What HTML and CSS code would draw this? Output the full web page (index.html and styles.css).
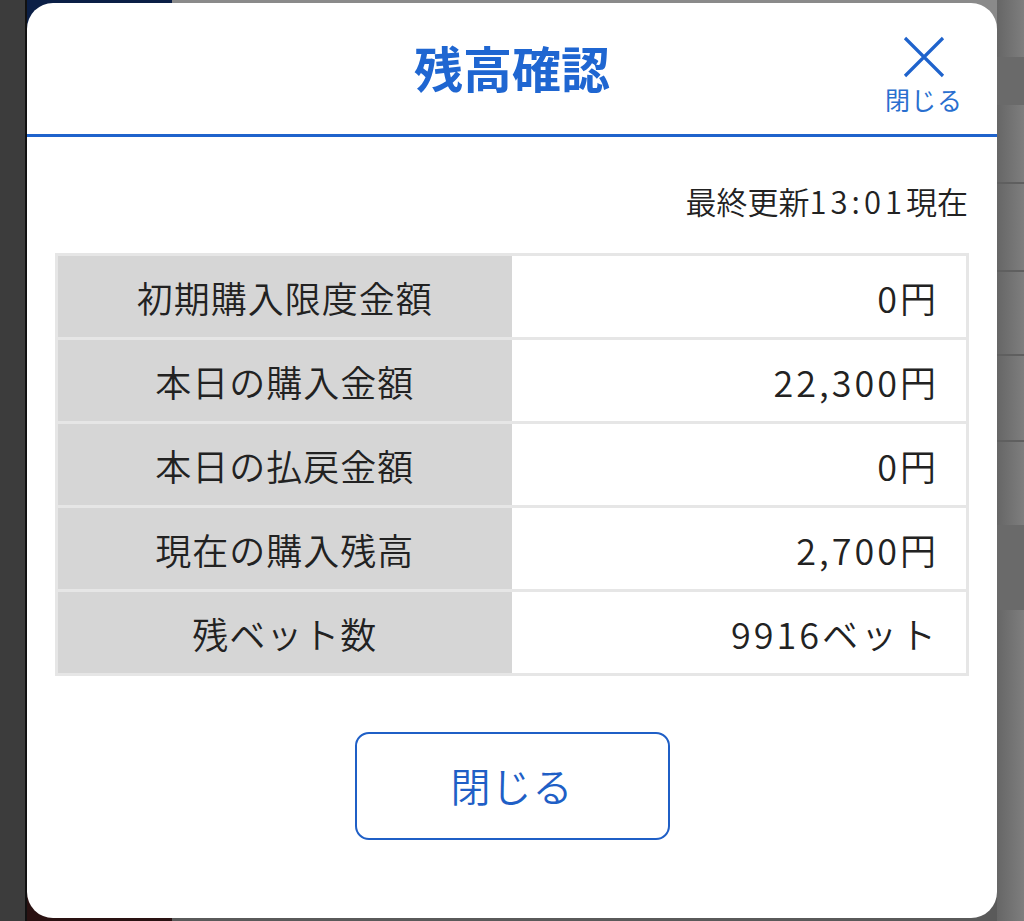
FILE: index.html
```html
<!DOCTYPE html>
<html lang="ja">
<head>
<meta charset="utf-8">
<title>残高確認</title>
<link rel="stylesheet" href="styles.css">
</head>
<body>
<div class="page">
  <div class="side side-left"></div>
  <div class="center">
    <div class="modal">
      <header class="modal-header">
        <div class="spacer"></div>
        <h1 class="title">残高確認</h1>
        <button class="close-top" type="button">
          <svg class="close-icon" width="42" height="42" viewBox="0 0 42 42" aria-hidden="true">
            <path d="M2 2 L40 40 M40 2 L2 40" stroke="#1f63cc" stroke-width="3.2" fill="none" stroke-linecap="butt"/>
          </svg>
          <span class="close-label">閉じる</span>
        </button>
      </header>
      <div class="modal-body">
        <p class="updated">最終更新<span class="num">13:01</span>現在</p>
        <table class="balance">
          <tr><th>初期購入限度金額</th><td>0円</td></tr>
          <tr><th>本日の購入金額</th><td>22,300円</td></tr>
          <tr><th>本日の払戻金額</th><td>0円</td></tr>
          <tr><th>現在の購入残高</th><td>2,700円</td></tr>
          <tr><th>残ベット数</th><td>9916ベット</td></tr>
        </table>
        <div class="actions">
          <button class="close-btn" type="button">閉じる</button>
        </div>
      </div>
    </div>
  </div>
  <div class="side side-right"></div>
</div>
</body>
</html>
```
FILE: styles.css
```css
* { box-sizing: border-box; }
html, body { margin: 0; padding: 0; }
body {
  width: 1024px;
  height: 921px;
  overflow: hidden;
  font-family: "Noto Sans CJK JP", "Noto Sans", sans-serif;
  background: #3b3b3b;
}
.page {
  display: grid;
  grid-template-columns: 27px 970px 27px;
  height: 921px;
}
.side-left {
  background: #3c3c3c;
  border-right: 2px solid #111;
}
.side-right {
  background:
    linear-gradient(#6a6a6a, #6a6a6a) 0 57px / 100% 48px no-repeat,
    linear-gradient(#5f5f5f, #5f5f5f) 0 182px / 100% 2px no-repeat,
    linear-gradient(#5f5f5f, #5f5f5f) 0 270px / 100% 2px no-repeat,
    linear-gradient(#5f5f5f, #5f5f5f) 0 354px / 100% 2px no-repeat,
    linear-gradient(#5f5f5f, #5f5f5f) 0 440px / 100% 2px no-repeat,
    linear-gradient(#6a6a6a, #6a6a6a) 0 525px / 100% 85px no-repeat,
    linear-gradient(to right, #666, #7e7e7e);
}
.center {
  background:
    linear-gradient(to right, #0b1f46 15%, #8a8a8a 15%) top / 100% 40px no-repeat,
    linear-gradient(to right, #2a1212 15%, #5a5a5a 15%) bottom / 100% 40px no-repeat,
    #3b3b3b;
  padding-top: 3px;
}
.modal {
  background: #fff;
  height: 915px;
  border-radius: 26px;
  overflow: hidden;
}
.modal-header {
  height: 134px;
  border-bottom: 3px solid #1f63cc;
  display: grid;
  grid-template-columns: 1fr auto 1fr;
  align-items: start;
}
.title {
  margin: 0;
  padding-top: 32px;
  font-size: 49px;
  line-height: 64px;
  font-weight: 700;
  color: #1f66d1;
}
.close-top {
  justify-self: end;
  margin-right: 34px;
  margin-top: 33px;
  background: none;
  border: 0;
  padding: 0;
  display: flex;
  flex-direction: column;
  align-items: center;
  font-family: inherit;
  cursor: pointer;
}
.close-icon { display: block; }
.close-label {
  margin-top: 6px;
  font-size: 25px;
  line-height: 30px;
  color: #2a6fcf;
  letter-spacing: 1px;
}
.modal-body {
  padding: 0 28px;
}
.updated {
  margin: 46px 0 0;
  text-align: right;
  font-size: 31px;
  line-height: 36px;
  font-weight: 350;
  color: #222;
  padding-right: 1px;
}
.updated .num {
  letter-spacing: 4px;
  margin-right: 0;
}
.balance {
  margin-top: 34px;
  width: 100%;
  border-collapse: collapse;
  border: 3px solid #e6e6e6;
  font-size: 36px;
  color: #222;
}
.balance tr { height: 84px; }
.balance th, .balance td {
  border-top: 3px solid #e6e6e6;
  border-bottom: 3px solid #e6e6e6;
  padding: 0;
  font-weight: 350;
  line-height: 40px;
}
.balance th {
  width: 455px;
  background: #d6d6d6;
  text-align: center;
  letter-spacing: 1px;
}
.balance td {
  background: #fff;
  text-align: right;
  padding-right: 27px;
  letter-spacing: 3px;
}
.actions {
  display: flex;
  justify-content: center;
  margin-top: 56px;
}
.close-btn {
  width: 315px;
  height: 108px;
  border: 2px solid #1f5fc6;
  border-radius: 14px;
  background: #fff;
  color: #1f5fc6;
  font-family: inherit;
  font-size: 40px;
  font-weight: 350;
  letter-spacing: 1px;
  padding-bottom: 4px;
  cursor: pointer;
}
```
